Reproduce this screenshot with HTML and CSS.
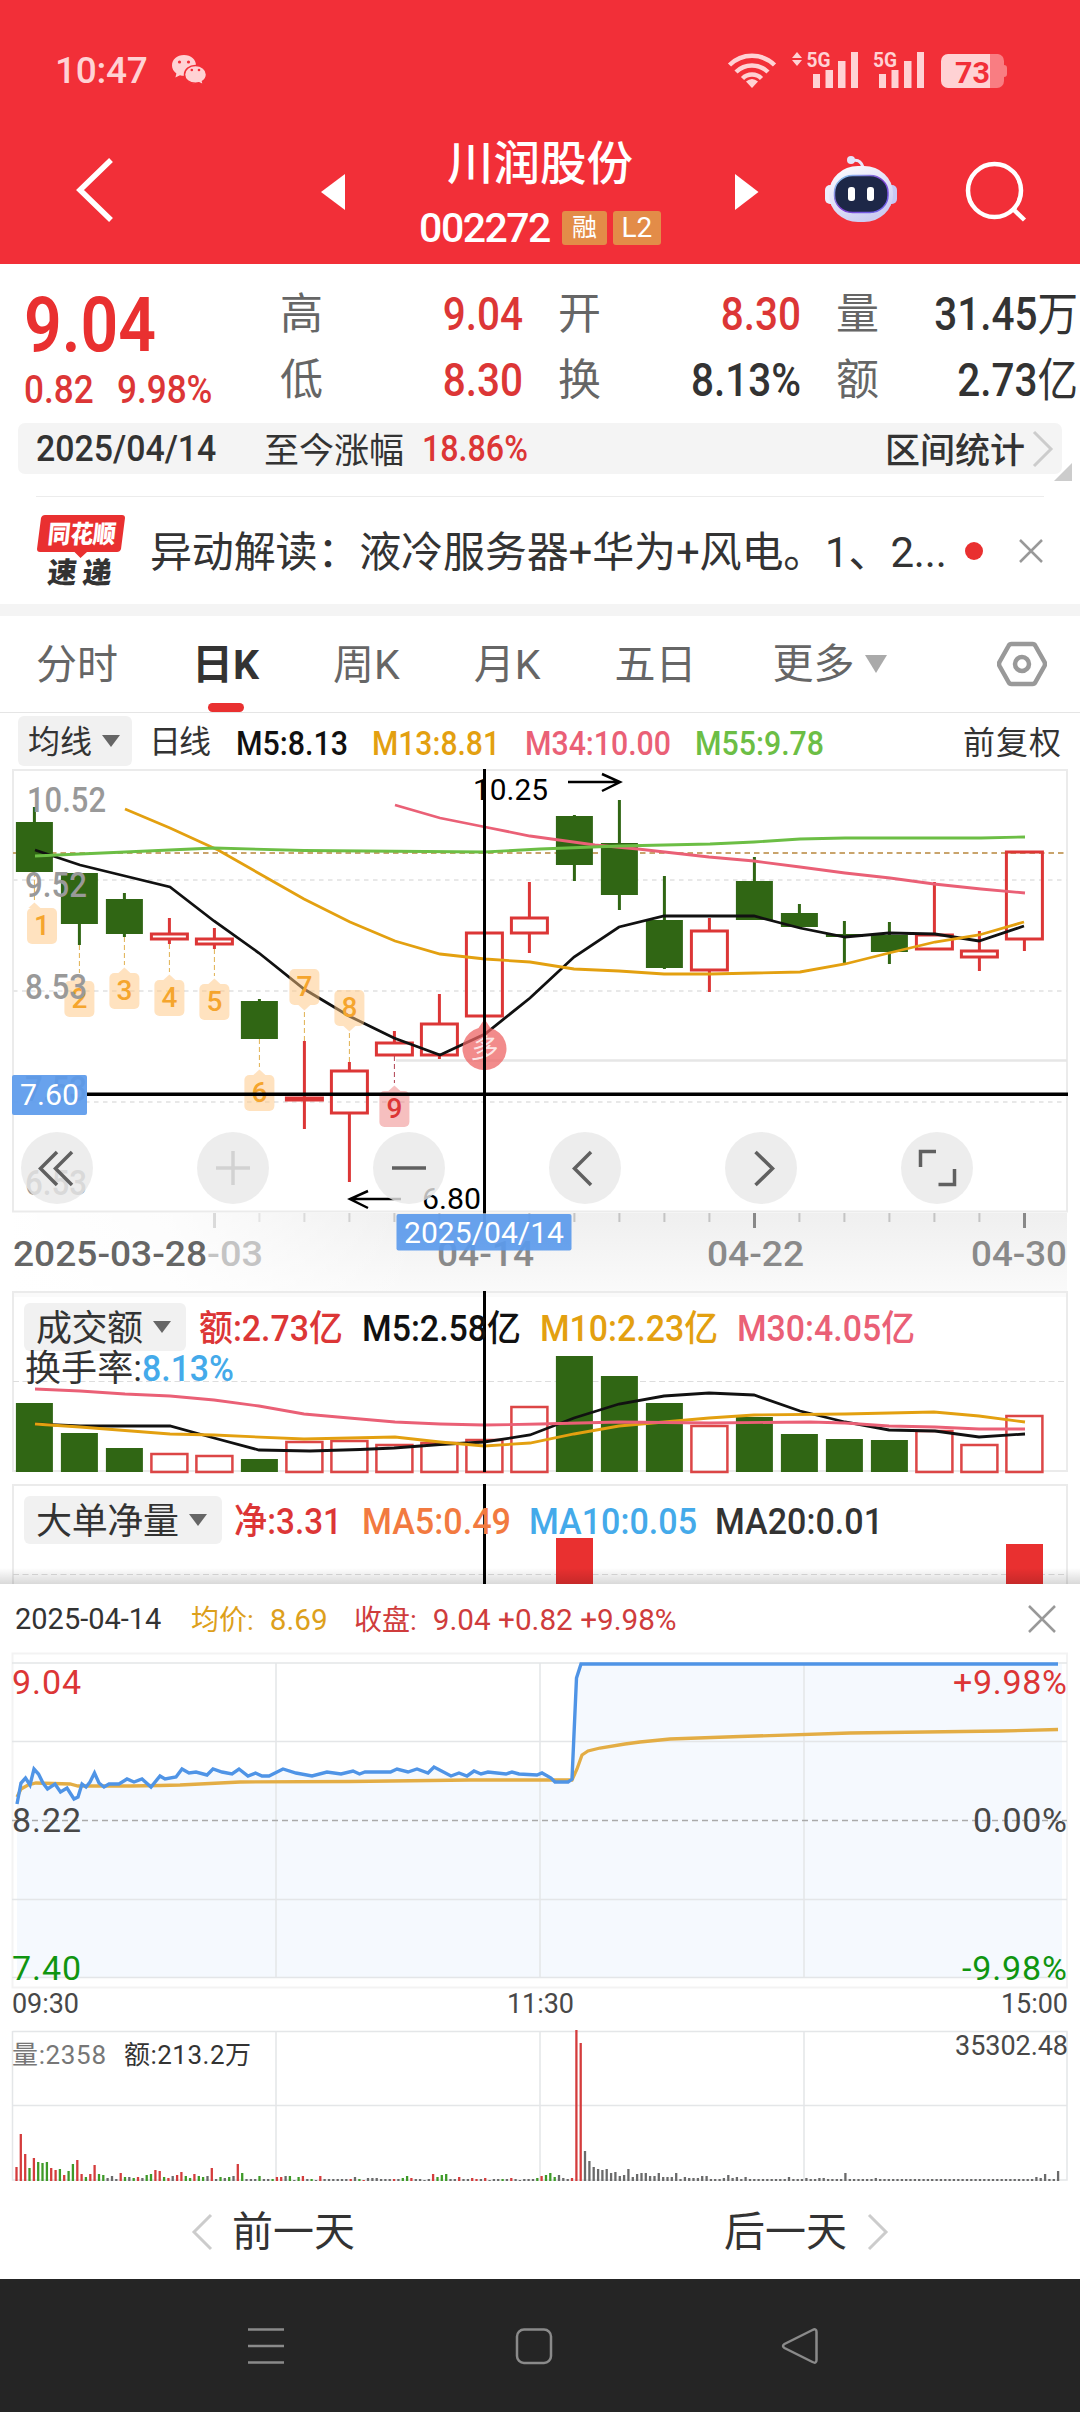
FILE: index.html
```html
<!DOCTYPE html>
<html lang="zh-CN">
<head>
    <meta charset="UTF-8">
    <meta name="viewport" content="width=device-width, initial-scale=1.0">
    <title>川润股份 002272</title>
    <link rel="stylesheet" href="styles.css">
</head>
<body>
    <header class="header">
        <div class="status-bar">
            <span class="clock">10:47</span>
            <svg class="wechat" width="36" height="32" viewBox="171 56 36 32">
                <path d="M184 57c-7 0-12 4.600-12 10.500 0 3.300 1.700 6 4.400 8l-1 4 4.600-2.300c1.200.4 2.600.5 4 .5 7 0 12-4.600 12-10.300S191 57 184 57z"/>
                <path class="wechat-front" d="M195.500 67.500c-6.200 0-11 3.900-11 8.900s4.800 8.900 11 8.900c1.200 0 2.400-.2 3.500-.5l4.500 2.200-1-3.700c2.400-1.600 4-4.100 4-6.900 0-5-4.800-8.900-11-8.900z"/>
                <g class="wechat-eye"><circle cx="179.500" cy="64" r="1.600"/><circle cx="188.500" cy="64" r="1.600"/><circle cx="191.800" cy="72" r="1.300"/><circle cx="199" cy="72" r="1.300"/></g>
            </svg>
            <svg class="signals" width="290" height="44" viewBox="722 48 290 44">
                <g class="wifi">
                    <path d="M729.500 65a32 32 0 0 1 45 0"/>
                    <path d="M736 72a23 23 0 0 1 32 0"/>
                    <path d="M742.500 78.500a13.500 13.500 0 0 1 19 0"/>
                </g>
                <path d="M752 88l-6-6.500q6-5 12 0z"/>
                <path d="M797 52l5 6h-10zM797 66l5-6h-10z"/>
                <text x="806.500" y="67" textLength="24" lengthAdjust="spacingAndGlyphs">5G</text>
                <path d="M813 74h7v14h-7zM825.500 70h7.500v18h-7.500zM838 61h7.500v27h-7.500zM851 52h7v36h-7z"/>
                <text x="873" y="67" textLength="24" lengthAdjust="spacingAndGlyphs">5G</text>
                <path d="M879 74h7v14h-7zM891.500 70h7v18h-7zM904 61h7.500v27h-7.500zM917 52h7v36h-7z"/>
                <path class="battery-rest" d="M990 54h8a7 7 0 0 1 6 7v4q3 0 3 3v6q0 3-3 3v4a7 7 0 0 1-7 7h-7z"/>
                <path d="M948 54h42v34h-42a7 7 0 0 1-7-7v-20a7 7 0 0 1 7-7z"/>
                <text class="battery-text" x="955" y="82.500" textLength="35" lengthAdjust="spacingAndGlyphs">73</text>
            </svg>
        </div>
        <div class="title-bar">
            <svg width="319" height="132" viewBox="0 132 319 132"><path class="stroke-white back" d="M111 160L80 190l31 30"/></svg>
            <svg width="28" height="132" viewBox="319 132 28 132"><path d="M345 174v36l-24-18z"/></svg>
            <div class="title">
                <h1>川润股份</h1>
                <p><span class="code">002272</span><em>融</em><em class="level">L2</em></p>
            </div>
            <svg width="28" height="132" viewBox="733 132 28 132"><path d="M735 174v36l23.500-18z"/></svg>
            <svg width="180" height="132" viewBox="761 132 180 132">
                <defs>
                    <linearGradient id="shell" x1="0" y1="0" x2="0.500" y2="1"><stop offset="0" stop-color="#ffffff"/><stop offset="1" stop-color="#ccccf2"/></linearGradient>
                    <linearGradient id="rim" x1="0" y1="0" x2="1" y2="1"><stop offset="0" stop-color="#8fe0f5"/><stop offset="0.500" stop-color="#8040d0"/><stop offset="1" stop-color="#6a6af0"/></linearGradient>
                </defs>
                <path class="antenna" d="M851 161q9-3 12 6"/>
                <circle cx="851" cy="160" r="4" fill="#e4e4fa"/>
                <rect x="825" y="185" width="12" height="19" rx="5" fill="#eeeefc"/>
                <rect x="885" y="185" width="12" height="19" rx="5" fill="#c8c8f4"/>
                <rect x="829" y="166" width="64" height="56" rx="29" ry="27" fill="url(#shell)"/>
                <rect x="834.500" y="175.500" width="53.500" height="37" rx="18" ry="17" fill="#1d2747" stroke="url(#rim)" stroke-width="1.500"/>
                <rect x="848" y="187" width="7" height="14" rx="3"/>
                <rect x="867" y="187" width="7" height="14" rx="3"/>
            </svg>
            <svg width="139" height="132" viewBox="941 132 139 132"><g class="stroke-white"><circle cx="994.500" cy="190.500" r="26.500"/><path d="M1012 208l12.500 12"/></g></svg>
        </div>
    </header>

    <section class="quote">
        <div class="last">
            <strong class="num">9.04</strong>
            <p><span class="num">0.82</span><span class="num">9.98%</span></p>
        </div>
        <dl>
            <dt>高</dt><dd class="up">9.04</dd>
            <dt>开</dt><dd class="up">8.30</dd>
            <dt>量</dt><dd>31.45<i>万</i></dd>
            <dt>低</dt><dd class="up">8.30</dd>
            <dt>换</dt><dd>8.13%</dd>
            <dt>额</dt><dd>2.73<i>亿</i></dd>
        </dl>
    </section>

    <section class="range">
        <span class="range-date num">2025/04/14</span>
        <span class="range-label">至今涨幅</span>
        <span class="range-value num">18.86%</span>
        <span class="range-link">区间统计</span>
        <svg width="22" height="38" viewBox="0 0 22 38"><path d="M2 2l17 17L2 36"/></svg>
        <i class="corner"></i>
    </section>

    <section class="news">
        <svg class="news-logo" width="92" height="76" viewBox="36 512 92 76">
            <path class="logo-box" d="M45 514h77q3 0 3 3l-4 31q-1 3-4 3H87l-6.500 6-6-6H40q-3 0-3-3l4-31q1-3 4-3z"/>
            <g transform="skewX(-6)">
                <text class="logo-top" x="104" y="542" textLength="68" lengthAdjust="spacingAndGlyphs">同花顺</text>
                <text class="logo-bottom" x="108" y="582" textLength="64">速递</text>
            </g>
        </svg>
        <p>异动解读：液冷服务器+华为+风电。1、2...</p>
        <i class="dot"></i>
        <svg width="26" height="26" viewBox="0 0 26 26"><path d="M2 2l22 22M24 2L2 24"/></svg>
    </section>

    <nav class="tabs">
        <a>分时</a>
        <a class="active">日K</a>
        <a>周K</a>
        <a>月K</a>
        <a>五日</a>
        <a class="more">更多<i class="caret"></i></a>
        <svg width="50" height="50" viewBox="995 639 50 50"><path d="M1009.500 644h21q2 0 3 2l9 16q1 2 0 4l-9 16q-1 2-3 2h-21q-2 0-3-2l-9-16q-1-2 0-4l9-16q1-2 3-2z"/><circle cx="1020" cy="664" r="7"/></svg>
    </nav>

    <main class="charts">
        <!-- daily candles, user space is in page pixels -->
        <svg class="chart" id="kline" width="1080" height="578" viewBox="0 713 1080 578">
            <defs>
                <linearGradient id="axisFade" x1="0" y1="0" x2="0" y2="1"><stop offset="0" stop-color="#efefef"/><stop offset="1" stop-color="#fafafa"/></linearGradient>
                <linearGradient id="axisLeft"><stop offset="0" stop-color="#fff"/><stop offset="0.400" stop-color="#fff" stop-opacity=".85"/><stop offset="1" stop-color="#fff" stop-opacity="0"/></linearGradient>
            </defs>
            <rect class="pill" x="18" y="716" width="114" height="50" rx="6"/>
            <g class="legend small">
                <text class="normal dark" x="28" y="753" textLength="64">均线</text>
                <text class="normal dark" x="149" y="753" textLength="62">日线</text>
                <text class="c-black" x="236" y="754.500" textLength="112" lengthAdjust="spacingAndGlyphs">M5:8.13</text>
                <text class="c-gold" x="372" y="754.500" textLength="128" lengthAdjust="spacingAndGlyphs">M13:8.81</text>
                <text class="c-pink" x="525" y="754.500" textLength="146" lengthAdjust="spacingAndGlyphs">M34:10.00</text>
                <text class="c-green" x="695" y="754.500" textLength="129" lengthAdjust="spacingAndGlyphs">M55:9.78</text>
                <text class="normal dark" x="963" y="754" textLength="98">前复权</text>
            </g>
            <path class="caret-fill" d="M102 735h18l-9 12z"/>

            <rect class="frame" x="13" y="770" width="1054" height="441.500"/>
            <path class="grid" d="M13 880h1054M13 991h1054M13 1102h1054"/>
            <path class="gap-line" d="M396 1060.500h671"/>
            <path class="price-line" d="M13 853h1051"/>
            <g id="candles"></g>
            <polyline class="line c-pink" points="395,805 440,818 485,827 530,836 595,845 638,849 709,857 754,861 800,867 845,873 890,878 934,884 981,889 1025,893"/>
            <polyline class="line c-black" points="35,850 80,865 125,876 170,887 214,921 259,953 304,989 349,1016 394,1038 440,1055 485,1034 530,998 574,957 619,927 664,916 754,916 800,928 845,937 889,933 935,934 979,941 1024,926"/>
            <polyline class="line c-gold" points="125,809 170,828 218,850 260,874 304,899 350,922 395,941 440,954 485,959 530,962 574,969 619,971 664,974 710,974 755,973 800,972 845,964 889,953 935,942 979,935 1024,922"/>
            <polyline class="line c-green" points="35,856 125,852 214,848 304,850.500 485,852 540,849 619,846 710,844 754,842 800,839 845,838 981,838 1025,837"/>

            <g id="marks"></g>
            <g class="axis-text">
                <text x="27" y="812" textLength="79" lengthAdjust="spacingAndGlyphs">10.52</text>
                <text x="25" y="897" textLength="62" lengthAdjust="spacingAndGlyphs">9.52</text>
                <text x="25" y="999" textLength="62" lengthAdjust="spacingAndGlyphs">8.53</text>
                <text x="25" y="1101" textLength="62" lengthAdjust="spacingAndGlyphs">7.53</text>
                <text x="25" y="1195" textLength="62" lengthAdjust="spacingAndGlyphs">6.53</text>
            </g>
            <g class="signal">
                <path d="M484.500 1019l6 9a22 21.500 0 1 1-12 0z"/>
                <text x="471" y="1058" transform="skewX(-8) translate(148 0)">多</text>
            </g>

            <path class="arrow" d="M568 782h51M602 774l18 8-18 9"/>
            <text class="extreme" x="473" y="800" textLength="75" lengthAdjust="spacingAndGlyphs">10.25</text>
            <path class="arrow" d="M351 1199h50M368 1191l-18 8 18 9"/>
            <text class="extreme" x="422" y="1209" textLength="59" lengthAdjust="spacingAndGlyphs">6.80</text>

            <g class="tools">
                <circle cx="57" cy="1168" r="36"/><circle cx="233" cy="1168" r="36"/><circle cx="409" cy="1168" r="36"/>
                <circle cx="585" cy="1168" r="36"/><circle cx="761" cy="1168" r="36"/><circle cx="937" cy="1168" r="36"/>
                <path d="M57 1152l-16.500 16.500L57 1185M72 1152l-16.500 16.500L72 1185M392 1168h34M591 1152l-16.500 16.500L591 1185M755.500 1152l17 16.500-17 16.500M936 1151.500h-15.500v15.500M938.500 1184.500h16v-15.500"/>
                <path class="off" d="M216 1168h34M233 1151v34"/>
            </g>

            <rect x="13" y="1213" width="1054" height="78" fill="url(#axisFade)"/>
            <path class="ticks" id="ticks"/>
            <path class="ticks major" d="M214.500 1213v15M484.500 1213v15M754.500 1213v15M1024.500 1213v15"/>
            <rect x="0" y="1213" width="420" height="78" fill="url(#axisLeft)"/>
            <g class="date-text">
                <text x="13" y="1266" textLength="194" lengthAdjust="spacingAndGlyphs">2025-03-28</text>
                <text class="faded" x="207" y="1266" textLength="56" lengthAdjust="spacingAndGlyphs">-03</text>
                <text class="mid" x="437" y="1266" textLength="97" lengthAdjust="spacingAndGlyphs">04-14</text>
                <text class="mid" x="707" y="1266" textLength="97" lengthAdjust="spacingAndGlyphs">04-22</text>
                <text class="mid" x="971" y="1266" textLength="96" lengthAdjust="spacingAndGlyphs">04-30</text>
            </g>

            <path class="cross-h" d="M87 1094.300h981"/>
            <path class="cross" d="M484.500 769v444"/>
            <g class="cross-label">
                <rect x="12" y="1075" width="75" height="40" rx="2"/>
                <text x="20" y="1105" textLength="59" lengthAdjust="spacingAndGlyphs">7.60</text>
                <rect x="396.500" y="1214" width="175" height="36.500" rx="2"/>
                <text x="404" y="1243" textLength="160" lengthAdjust="spacingAndGlyphs">2025/04/14</text>
            </g>
        </svg>

        <!-- turnover -->
        <svg class="chart" width="1080" height="188" viewBox="0 1291 1080 188">
            <rect x="13" y="1291" width="1054" height="6" fill="#fafafa"/>
            <rect class="frame" x="13" y="1292" width="1054" height="179"/>
            <path class="grid thin" d="M13 1381.500h1054"/>
            <g id="turnover"></g>
            <polyline class="line c-black" points="35,1424 80,1426 170,1426 214,1438 259,1450 310,1451 360,1449.500 394,1448 440,1444.500 484,1442 530,1435 574,1418 619,1404 664,1396 709,1393 754,1395 800,1411 845,1422 889,1430 935,1431 979,1437 1025,1434"/>
            <polyline class="line c-gold" points="35,1424 80,1427 170,1434 214,1435 304,1439 395,1437 440,1442 484,1446 530,1443 574,1434 619,1426 664,1422 709,1418 754,1415 845,1414 934,1412 979,1416 1025,1422"/>
            <polyline class="line c-pink" points="35,1389 80,1391 125,1394 170,1396 214,1400 259,1406 304,1414 349,1418 395,1422 440,1424 484,1425 540,1424 619,1422 709,1423 810,1422 845,1423 889,1426 935,1427 979,1429 1025,1429"/>
            <rect class="pill" x="24" y="1303" width="162" height="48" rx="6"/>
            <path class="caret-fill" d="M153 1321h18l-9 12z"/>
            <path class="cross" d="M484.500 1291v181"/>
            <g class="legend">
                <text class="normal dark" x="36" y="1341" textLength="107">成交额</text>
                <text class="c-red" x="199" y="1340.500" textLength="144" lengthAdjust="spacingAndGlyphs">额:2.73亿</text>
                <text class="c-black" x="362" y="1340.500" textLength="159" lengthAdjust="spacingAndGlyphs">M5:2.58亿</text>
                <text class="c-gold" x="540" y="1340.500" textLength="178" lengthAdjust="spacingAndGlyphs">M10:2.23亿</text>
                <text class="c-pink" x="737" y="1340.500" textLength="178" lengthAdjust="spacingAndGlyphs">M30:4.05亿</text>
                <text class="normal dark" x="25" y="1380.500" textLength="117" lengthAdjust="spacingAndGlyphs">换手率:</text>
                <text class="c-blue" x="142" y="1380.500" textLength="92" lengthAdjust="spacingAndGlyphs">8.13%</text>
            </g>
        </svg>

        <!-- net big orders, cut off by the sheet below -->
        <svg class="chart" width="1080" height="105" viewBox="0 1479 1080 105">
            <defs><linearGradient id="sheetShadow" x1="0" y1="0" x2="0" y2="1"><stop offset="0" stop-opacity="0"/><stop offset="1" stop-opacity=".15"/></linearGradient></defs>
            <rect class="frame" x="13" y="1485" width="1054" height="120"/>
            <path class="grid thin" d="M13 1574.500h1054"/>
            <path class="net-bar" d="M556 1538h37v46h-37zM1006 1544h37v40h-37z"/>
            <rect class="pill" x="24" y="1496" width="198" height="48" rx="6"/>
            <path class="caret-fill" d="M189 1514h18l-9 12z"/>
            <path class="cross" d="M484.500 1484v100"/>
            <g class="legend">
                <text class="normal dark" x="36" y="1534" textLength="143">大单净量</text>
                <text class="c-red" x="234" y="1533.500" textLength="108" lengthAdjust="spacingAndGlyphs">净:3.31</text>
                <text class="c-orange" x="362" y="1533.500" textLength="149" lengthAdjust="spacingAndGlyphs">MA5:0.49</text>
                <text class="c-blue" x="529" y="1533.500" textLength="168" lengthAdjust="spacingAndGlyphs">MA10:0.05</text>
                <text class="dark" x="715" y="1533.500" textLength="168" lengthAdjust="spacingAndGlyphs">MA20:0.01</text>
            </g>
            <rect x="0" y="1568" width="1080" height="16" fill="url(#sheetShadow)"/>
        </svg>
    </main>

    <section class="sheet">
        <div class="sheet-head">
            <span class="day">2025-04-14</span>
            <span class="avg">均价:<b>8.69</b></span>
            <span class="close">收盘:<b>9.04 +0.82 +9.98%</b></span>
            <svg width="30" height="30" viewBox="0 0 30 30"><path d="M2 2l26 26M28 2L2 28"/></svg>
        </div>
        <svg class="chart" width="1080" height="545" viewBox="0 1650 1080 545">
            <rect class="frame faint" x="12.500" y="1653.500" width="1054.500" height="334"/>
            <path class="area" id="area"/>
            <path class="minute-grid" d="M12 1663h1055M12 1741.500h1055M12 1899.500h1055M12 1977.500h1055M276 1663v314.500M540 1663v314.500M804 1663v314.500M12.500 2031.500h1055M12 2105.500h1055M12.500 2031v149h1054.500v-149M276 2031v149M540 2031v149M804 2031v149"/>
            <path class="zero-line" d="M12 1820.500h1055"/>
            <polyline class="line avg-line" points="17,1797 21,1789 28,1785 36,1783 70,1784 78,1786 130,1786 160,1785.500 180,1785 240,1782 350,1781.500 470,1780 572,1780 577,1769 582,1755 588,1751 600,1748 625,1744 640,1742 670,1739 740,1736.500 850,1733 1000,1731 1058,1729.500"/>
            <polyline class="line price" id="price"/>
            <g class="scale">
                <text class="c-red" x="12" y="1694" textLength="69">9.04</text>
                <text x="12" y="1832" textLength="69">8.22</text>
                <text class="c-down" x="12" y="1980" textLength="69">7.40</text>
                <text class="c-red" x="953" y="1694" textLength="114">+9.98%</text>
                <text x="973" y="1832" textLength="94">0.00%</text>
                <text class="c-down" x="962" y="1980" textLength="105">-9.98%</text>
            </g>
            <g class="times">
                <text x="12" y="2013" textLength="67">09:30</text>
                <text x="507" y="2013" textLength="67">11:30</text>
                <text x="1001" y="2013" textLength="67">15:00</text>
                <text x="955" y="2055" textLength="113">35302.48</text>
                <text class="soft" x="12" y="2064" textLength="94">量:2358</text>
                <text class="dark" x="124" y="2064" textLength="127">额:213.2万</text>
            </g>
            <g id="minuteVolume"></g>
        </svg>
        <div class="days">
            <a><svg width="22" height="38" viewBox="0 0 22 38"><path d="M20 2L3 19l17 17"/></svg>前一天</a>
            <a>后一天<svg width="22" height="38" viewBox="0 0 22 38"><path d="M2 2l17 17L2 36"/></svg></a>
        </div>
    </section>

    <footer class="navbar">
        <svg width="1080" height="133" viewBox="0 2279 1080 133">
            <path d="M248 2329.500h36M248 2346h36M248 2362.500h36"/>
            <rect x="517" y="2329.500" width="34" height="33.500" rx="7"/>
            <path d="M812.500 2330l-28 14q-3 2 0 4l28 14q4 2 4-2v-28q0-4-4-2z"/>
        </svg>
    </footer>

    <script src="charts.js"></script>
</body>
</html>
```

FILE: styles.css
```css
body {
    margin: 0;
    width: 1080px;
    background: #fff;
    color: #333;
    font-family: Roboto, "Noto Sans CJK SC", sans-serif;
}
h1, p, dl, dd {
    margin: 0;
}
em, i {
    font-style: normal;
}
svg {
    display: block;
    flex: none;
}

/* header */
.header {
    height: 264px;
    background: #f22f38;
    color: #fff;
}
.status-bar {
    display: flex;
    align-items: center;
    height: 132px;
    padding: 8px 68px 0 55px;
    box-sizing: border-box;
    color: #ffd2d4;
    fill: #ffd2d4;
}
.clock {
    width: 116px;
    font-size: 37px;
    font-weight: 500;
    letter-spacing: -0.300px;
}
.wechat-front {
    stroke: #f22f38;
    stroke-width: 1.500;
}
.wechat-eye {
    fill: #f22f38;
}
.signals {
    margin-left: auto;
}
.signals text {
    font-size: 21px;
    font-weight: 700;
}
.wifi {
    fill: none;
    stroke: #ffd2d4;
    stroke-width: 4.500;
}
.signals .battery-text {
    font-size: 30px;
    fill: #f22f38;
}
.battery-rest {
    fill: #f97d82;
}
.title-bar {
    display: flex;
    height: 132px;
    fill: #fff;
}
.stroke-white {
    fill: none;
    stroke: #fff;
    stroke-width: 4.500;
}
.back {
    stroke-width: 5.500;
}
.antenna {
    fill: none;
    stroke: #e8e8fc;
    stroke-width: 3;
}
.title {
    width: 386px;
    text-align: center;
}
.title h1 {
    height: 64px;
    line-height: 65px;
    font-size: 46.500px;
    font-weight: 500;
}
.title p {
    display: flex;
    justify-content: center;
    align-items: center;
    height: 64px;
}
.code {
    margin-right: 12px;
    font-size: 41px;
    font-weight: 500;
    letter-spacing: -1.500px;
}
.title em {
    width: 45px;
    height: 34px;
    margin-right: 6px;
    border-radius: 3px;
    background: #e38c48;
    font-size: 25px;
    line-height: 34px;
}
.title .level {
    width: 48px;
    margin-right: 0;
    font-size: 28px;
}

/* quote */
.num {
    display: inline-block;
    transform: scaleX(.87);
    transform-origin: left;
    font-weight: 500;
}
.quote {
    display: flex;
    height: 149px;
    padding: 10px 0 0 24px;
    box-sizing: border-box;
}
.last {
    width: 256px;
    color: #e93030;
}
.last strong {
    height: 90px;
    margin-top: 5px;
    font-size: 76px;
    font-weight: 600;
    line-height: 92px;
}
.last p {
    display: flex;
    margin-top: -2px;
    font-size: 39px;
    line-height: 46px;
    color: #dc3636;
}
.last p .num {
    width: 93px;
    transform: scaleX(.9);
}
.quote dl {
    display: grid;
    grid-template-columns: 100px 143px 35px 100px 143px 35px 60px 182px;
    grid-template-rows: 66px 66px;
    line-height: 66px;
    padding-top: 7px;
}
.quote dt {
    font-size: 43px;
    color: #666;
}
.quote dt:nth-of-type(3n+2) {
    grid-column: 4;
}
.quote dt:nth-of-type(3n) {
    grid-column: 7;
}
.quote dd {
    font-size: 46px;
    font-weight: 500;
    text-align: right;
    white-space: nowrap;
    transform: scaleX(.88);
    transform-origin: right;
}
.quote i {
    font-size: 46px;
    font-weight: 400;
}
.up {
    color: #dc3636;
}

/* range statistics */
.range {
    position: relative;
    display: flex;
    align-items: center;
    width: 1044px;
    height: 51px;
    margin: 10px 18px 22px;
    padding: 0 8px 0 18px;
    box-sizing: border-box;
    border-radius: 7px;
    background: #f4f4f4;
    font-size: 35px;
}
.range-date {
    width: 228px;
    font-size: 37px;
    transform: scaleX(.915);
}
.range-label {
    width: 158px;
    margin-top: -3px;
}
.range-value {
    color: #dc3636;
    font-size: 37px;
}
.range-link {
    margin: -2px 7px 0 auto;
    font-weight: 500;
}
.range svg, .days svg {
    fill: none;
    stroke: #ccc;
    stroke-width: 3;
}
.corner {
    position: absolute;
    right: -10px;
    bottom: -7px;
    border-left: 18px solid transparent;
    border-bottom: 18px solid #ccc;
}

/* news */
.news {
    display: flex;
    align-items: center;
    height: 108px;
    margin: 0 36px;
    border-top: 1px solid #ececec;
    box-sizing: border-box;
}
.news-logo {
    margin-right: 22px;
}
.logo-box {
    fill: #e93030;
}
.logo-top {
    font-size: 25px;
    font-weight: 900;
    fill: #fff;
}
.logo-bottom {
    font-size: 29px;
    font-weight: 900;
    fill: #333;
}
.news p {
    width: 816px;
    margin-top: -4px;
    font-size: 42px;
    letter-spacing: -0.150px;
    white-space: nowrap;
}
.dot {
    width: 18px;
    height: 18px;
    margin-right: 35px;
    border-radius: 50%;
    background: #e93030;
}
.news svg:last-child, .sheet-head svg {
    fill: none;
    stroke: #999;
    stroke-width: 2.500;
}

/* tabs */
.tabs {
    display: flex;
    align-items: center;
    height: 109px;
    padding-left: 36px;
    border-top: 12px solid #f4f4f4;
    border-bottom: 1px solid #e5e5e5;
    box-sizing: border-box;
    font-size: 41px;
    color: #666;
}
.tabs a {
    height: 96px;
    line-height: 99px;
    margin-right: 74px;
}
.tabs .active {
    display: flex;
    flex-direction: column;
    align-items: center;
    font-weight: 700;
    color: #333;
}
.tabs .active::after {
    content: "";
    width: 36px;
    height: 9px;
    margin-top: -12px;
    border-radius: 5px;
    background: #e93030;
}
.tabs .more {
    display: flex;
    align-items: center;
    margin: 0 110px 0 2px;
}
.caret {
    margin-left: 10px;
    border: 11px solid transparent;
    border-top: 18px solid #aaa;
    border-bottom: 0;
}
.tabs svg {
    fill: none;
    stroke: #999;
    stroke-width: 4.500;
}

/* charts */
.line {
    fill: none;
    stroke-width: 2.800;
}
text.c-black { fill: #111; }
text.c-gold { fill: #e3a010; }
text.c-pink { fill: #ea6076; }
text.c-green { fill: #6cbe45; }
.line.c-black { stroke: #111; }
.line.c-gold { stroke: #e3a010; }
.line.c-pink { stroke: #ea6076; }
.line.c-green { stroke: #6cbe45; }
.c-blue { fill: #44aaea; }
.c-orange { fill: #f27a40; }
.c-red { fill: #dc3636; }
.c-down { fill: #109510; }
.dark { fill: #333; }
.pill {
    fill: #f1f1f1;
}
.caret-fill {
    fill: #666;
}
.legend {
    font-size: 36px;
    font-weight: 500;
}
.legend.small {
    font-size: 33px;
}
.legend .normal {
    font-weight: 400;
}
.small .normal {
    font-size: 32px;
}
.frame {
    fill: none;
    stroke: #ebebeb;
    stroke-width: 2;
}
.grid {
    stroke: #e8e8e8;
    stroke-width: 2;
    stroke-dasharray: 4.500 4.500;
}
.grid.thin {
    stroke: #ddd;
    stroke-width: 1;
    stroke-dasharray: 6 3.500;
}
.gap-line {
    stroke: #e6e6e6;
    stroke-width: 2.500;
}
.price-line {
    stroke: #c9a46c;
    stroke-width: 1.800;
    stroke-dasharray: 5.500 4;
}
.fall {
    fill: #306614;
}
.rise {
    fill: none;
    stroke: #dc3636;
    stroke-width: 3;
}
.rise.thin {
    stroke: #dc4646;
    stroke-width: 2.500;
}
.axis-text {
    font-size: 35px;
    font-weight: 500;
    fill: #999;
}
.mark rect, .mark .nub {
    fill: #ffc680;
    fill-opacity: .5;
}
.mark text {
    font-size: 28px;
    font-weight: 500;
    text-anchor: middle;
    fill: #f5a52d;
}
.mark .lead {
    stroke: #e0b050;
    stroke-width: 1;
    stroke-dasharray: 5 3;
}
.mark.nine rect, .mark.nine .nub {
    fill: #ee7f7f;
}
.mark.nine text {
    fill: #dc3636;
}
.mark.nine .lead {
    stroke: #b04050;
}
.signal path {
    fill: #ee6464;
    fill-opacity: .75;
}
.signal text {
    font-size: 27px;
    fill: #fff;
    fill-opacity: .8;
}
.arrow {
    fill: none;
    stroke: #000;
    stroke-width: 2.500;
}
.extreme {
    font-size: 30px;
    fill: #000;
}
.tools circle {
    fill: #e8e8e8;
    fill-opacity: .8;
}
.tools path {
    fill: none;
    stroke: #606060;
    stroke-width: 3.500;
}
.tools .off {
    stroke: #d2d2d2;
}
.ticks {
    stroke: #c4c4c4;
    stroke-width: 2;
}
.ticks.major {
    stroke: #888;
    stroke-width: 3;
}
.date-text {
    font-size: 35px;
    font-weight: 500;
    fill: #666;
}
.date-text .mid {
    fill: #8a8a8a;
}
.date-text .faded {
    fill: #c4c4c4;
}
.cross {
    stroke: #000;
    stroke-width: 3;
}
.cross-h {
    stroke: #000;
    stroke-width: 3.500;
}
.cross-label rect {
    fill: #5b9aec;
    fill-opacity: .92;
}
.cross-label text {
    font-size: 30px;
    fill: #fff;
}
.net-bar {
    fill: #e93030;
}

/* intraday sheet */
.sheet {
    height: 695px;
}
.sheet-head {
    display: flex;
    align-items: center;
    height: 66px;
    padding: 4px 23px 0 15px;
    box-sizing: border-box;
    font-size: 28px;
}
.sheet-head .day {
    width: 176px;
    font-size: 29px;
}
.sheet-head .avg {
    width: 163px;
    margin-top: -2px;
    color: #dda01c;
}
.sheet-head .close {
    margin-top: -2px;
    color: #cf3c3c;
}
.sheet-head b {
    margin-left: 16px;
    font-size: 29.700px;
    font-weight: 400;
}
.sheet-head svg {
    margin-left: auto;
}
.frame.faint {
    stroke: #f3f3f3;
}
.area {
    fill: #f5f9fe;
}
.minute-grid {
    fill: none;
    stroke: #e4e6e8;
    stroke-width: 1.500;
}
.zero-line {
    stroke: #aaa;
    stroke-width: 1.500;
    stroke-dasharray: 6 4;
}
.line.avg-line {
    stroke: #e3ad45;
    stroke-width: 3.300;
}
.line.price {
    stroke: #4f94e6;
    stroke-width: 3.400;
}
.scale {
    font-size: 34px;
    fill: #484848;
}
.times {
    font-size: 27px;
    fill: #484848;
}
.times .soft, .times .dark {
    font-size: 26px;
}
.times .soft {
    fill: #777;
}
.vol-r { stroke: #d43c3c; }
.vol-g { stroke: #3e9a28; }
.vol-k { stroke: #6a6a6a; }
#minuteVolume {
    stroke-width: 2.300;
}
.days {
    display: flex;
    height: 84px;
    font-size: 41px;
    line-height: 75px;
}
.days a {
    display: flex;
    align-items: center;
    width: 368px;
    height: 74px;
    padding-left: 191px;
}
.days a:last-child {
    padding-left: 165px;
    width: 350px;
}
.days a:first-child svg {
    margin-right: 19px;
}
.days a:last-child svg {
    margin-left: 20px;
}

/* system navigation */
.navbar {
    height: 133px;
    background: #252525;
}
.navbar svg {
    fill: none;
    stroke: #8a8a8a;
    stroke-width: 2.500;
}
```

FILE: charts.js
```js
const FIRST_X = 34.4;
const STEP = 45;

// [kind, open/close top, open/close bottom, high, low]
const candles = [
    ['g', 822, 872, 807, 872], ['g', 873, 924, 873, 945], ['g', 899, 934, 893, 937],
    ['r', 934, 939, 918, 944], ['r', 939, 944, 928, 949], ['g', 1001, 1039, 999, 1039],
    ['r', 1098, 1100, 1041, 1129], ['r', 1071, 1113, 1062, 1182], ['r', 1043, 1055, 1031, 1055],
    ['r', 1024, 1055, 994, 1059], ['r', 933, 1016, 933, 1016], ['r', 918, 933, 882, 953],
    ['g', 816, 865, 815, 881], ['g', 843, 895, 800, 910], ['g', 920, 968, 876, 969],
    ['r', 931, 970, 918, 992], ['g', 881, 920, 857, 920], ['g', 913, 927, 904, 927],
    ['g', 934, 937, 921, 963], ['g', 935, 952, 922, 964], ['r', 935, 949, 882, 949],
    ['r', 951, 957, 931, 971], ['r', 852, 939, 852, 951]
];

const turnover = [1403, 1433, 1448, 1454, 1456, 1459, 1442, 1441, 1445, 1443, 1440, 1407,
    1356, 1376, 1403, 1426, 1417, 1434, 1439, 1440, 1431, 1445, 1416];

let html = '';
let bars = '';
candles.forEach(([kind, top, bottom, high, low], i) => {
    const x = FIRST_X + STEP * i;
    if (kind === 'g') {
        html += `<path class="fall" d="M${x - 18.5} ${top}h37v${bottom - top}h-37zM${x - 1.5} ${high}h3v${low - high}h-3z"/>`;
        bars += `<rect class="fall" x="${x - 18.5}" y="${turnover[i]}" width="37" height="${1472 - turnover[i]}"/>`;
    } else {
        html += `<path class="rise" d="M${x - 18} ${top}h36v${bottom - top}h-36zM${x} ${high}V${top}M${x} ${bottom}V${low}"/>`;
        bars += `<rect class="rise thin" x="${x - 18}" y="${turnover[i]}" width="36" height="${1472 - turnover[i]}"/>`;
    }
});
document.getElementById('candles').innerHTML = html;
document.getElementById('turnover').innerHTML = bars;

// nine-turn marks: [number, x, box top, lead start, nub below?]
const marks = [
    [1, 42, 908, 872], [2, 79.4, 981, 945], [3, 124.4, 973, 937], [4, 169.4, 980, 944],
    [5, 214.4, 984, 949], [6, 259.4, 1075, 1039], [7, 304.4, 969, 1041, true],
    [8, 349.4, 990, 1062, true], [9, 394.4, 1091, 1056]
];
document.getElementById('marks').innerHTML = marks.map(([n, x, y, from, below]) => {
    const cx = n === 1 ? FIRST_X : x;
    const nub = below
        ? `M${cx - 6} ${y + 36}h12l-6 5.500z`
        : `M${cx - 6} ${y}h12l-6 -5.500z`;
    const to = below ? y + 43 : y - 8;
    return `<g class="mark${n === 9 ? ' nine' : ''}"><path class="lead" d="M${cx} ${from}V${to}"/>` +
        `<rect x="${x - 15}" y="${y}" width="30" height="36" rx="5"/><path class="nub" d="${nub}"/>` +
        `<text x="${x}" y="${y + 27}">${n}</text></g>`;
}).join('');

let ticks = '';
for (let i = 5; i < 22; i++) {
    ticks += `M${FIRST_X + STEP * i} 1213v9`;
}
document.getElementById('ticks').setAttribute('d', ticks);

// intraday price
const price = '17,1804 21,1783 25.5,1778 30,1785 34,1769 38.5,1774 43,1783 47.5,1789 55,1784 60.5,1792 67,1788 74,1799 78,1797 82,1784 86,1787 90,1782 94.5,1773 99,1783 104,1787 109,1784 119,1784 127,1779 134,1782 142,1779 151,1787 160,1776 165,1779 176,1777 182,1769 189,1773 196,1772 207,1775 213,1769 222,1772 232,1774 239,1769 248,1776 255.5,1773 262,1776 269,1776 283,1769 296,1773 312,1776 327,1772 341,1774 353,1771 359.5,1774 365,1772 390.5,1772 397,1769 408,1772 417,1769 428,1773 434,1767 451,1776 459,1773 467,1776 474,1771 481,1774 488,1772 506,1774 512,1772 519,1774 537,1775 542,1773 551,1778 555,1782 568,1782 572,1779 576.5,1678 581,1664 1058,1664';
document.getElementById('price').setAttribute('points', price);
document.getElementById('area').setAttribute('d', `M17 1977L${price.replace(/ /g, 'L')}L1062 1664V1977z`);

// one bar per minute
const volume = ('r14 r47 r27 g13 r23 g19 g18 g19 r13 r11 g12 r6 g10 g17 r21 r7 g4 r7 r16 g7 g6 k3 k5 k2 r8 g4 k4 g3 r4 k3 ' +
    'g6 g7 r11 r10 g4 r3 k5 r6 r9 g5 g3 r7 g5 g4 k5 r13 k2 g4 k3 g4 k5 r17 g8 k2 k2 k2 g5 k2 k2 g2 r4 r4 k5 g5 k1 g4 r5 k2 g2 k1 r5 k2 ' +
    'k2 k2 k2 k2 k2 r2 k4 g2 r1 k3 k3 k3 k2 k2 k2 r2 k2 g3 g5 r3 k2 k2 k1 k2 r7 g4 g6 g7 k2 k2 r4 k2 k2 r3 r2 k2 r3 k1 k2 k2 g2 k2 r3 k2 ' +
    'k1 k2 k2 k2 g3 r5 g6 g8 g4 k6 k3 k2 r3 r151 r138 k30 k20 k14 k12 k11 k12 k8 k9 k5 k6 k12 k4 k7 k8 k8 k5 k5 k8 k4 k4 k4 k8 k2 k4 k3 k3 ' +
    'k3 k5 k5 k2 k2 k2 k3 k6 k3 k4 k2 k4 k2 k2 k2').split(' ');
const peaks = { 178: 4, 182: 3, 185: 3, 186: 3, 191: 8, 198: 3, 235: 4, 236: 3, 237: 7, 240: 10 };
while (volume.length < 241) {
    volume.push('k' + (peaks[volume.length] || 2));
}
document.getElementById('minuteVolume').innerHTML = volume.map((v, i) =>
    `<path class="vol-${v[0]}" d="M${(16.5 + 4.34 * i).toFixed(1)} 2181v-${v.slice(1)}"/>`
).join('');
```
